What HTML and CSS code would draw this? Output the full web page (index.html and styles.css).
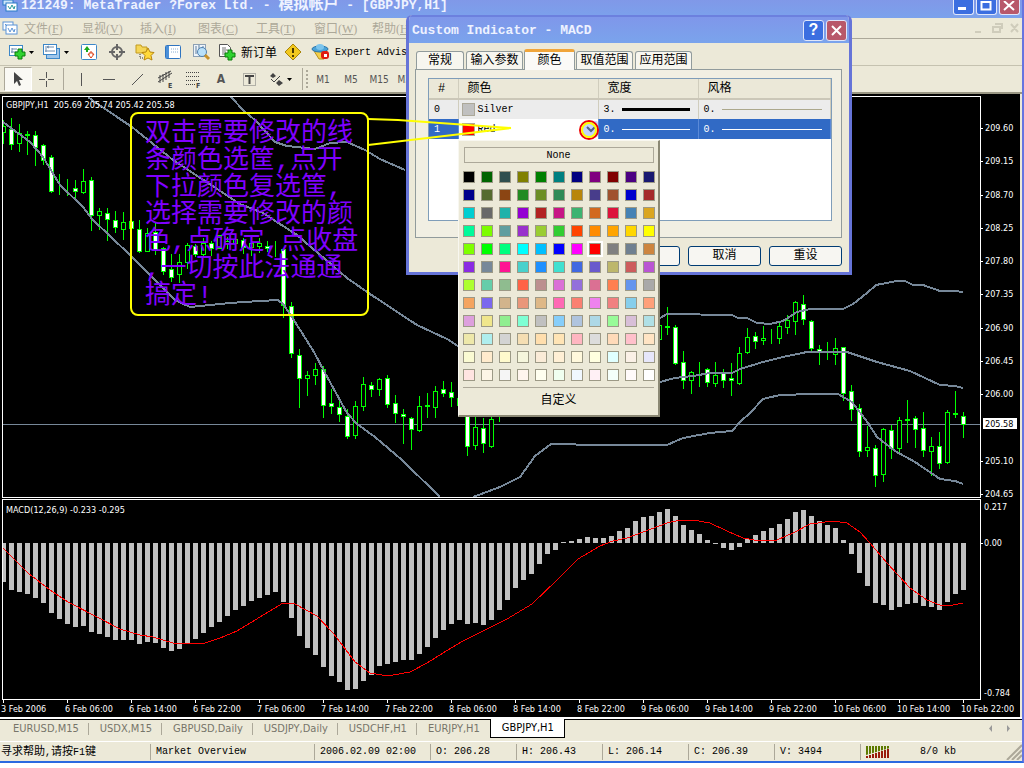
FILE: index.html
```html
<!DOCTYPE html>
<html lang="zh-CN">
<head>
    <meta charset="UTF-8">
    <meta name="viewport" content="width=device-width, initial-scale=1">
    <title>MetaTrader - [GBPJPY,H1]</title>
    <link rel="stylesheet" href="styles.css">
</head>
<body>

<div class="app">

    <header class="titlebar">
        <svg class="app-icon" width="16" height="12" viewBox="0 0 16 12"><rect x="1" y="0" width="10" height="5" fill="#cfe6f8" stroke="#2a7ac8"/><rect x="4" y="3" width="11" height="8" fill="#fff" stroke="#2a7ac8"/><path d="M6 6l2 3 2-4 2 4 1-3" fill="none" stroke="#2a9a9a"/></svg>
        <h1>121249: MetaTrader ?Forex Ltd. - <span class="cn">模拟帐户</span> - [GBPJPY,H1]</h1>
        <div class="win-buttons">
            <button aria-label="Minimize"><svg width="19" height="13"><rect x="4" y="6" width="8" height="3" fill="#fff"/></svg></button>
            <button aria-label="Maximize"><svg width="19" height="13"><path d="M4.500 0v8.500h9V0M4 1h10" fill="none" stroke="#fff" stroke-width="2"/></svg></button>
            <button class="close" aria-label="Close"><svg width="19" height="13"><path d="M4 0l10 9M14 0L4 9" stroke="#fff" stroke-width="2"/></svg></button>
        </div>
    </header>

    <nav class="menu">
        <svg width="16" height="16" viewBox="0 0 16 16"><rect x="1" y="2" width="10" height="8" fill="#fff" stroke="#5b93d6"/><rect x="4" y="5" width="11" height="9" fill="#fff" stroke="#5b93d6"/><path d="M3 4l2 2M6 8l2 4 2-4 2 4 1-3" fill="none" stroke="#5b93d6"/></svg>
        <a href="#">文件(<u>F</u>)</a>
        <a href="#">显视(<u>V</u>)</a>
        <a href="#">插入(<u>I</u>)</a>
        <a href="#">图表(<u>C</u>)</a>
        <a href="#">工具(<u>T</u>)</a>
        <a href="#">窗口(<u>W</u>)</a>
        <a href="#">帮助(<u>H</u>)</a>
        <svg class="mdi" width="50" height="14" viewBox="0 0 50 14"><g fill="none" stroke="#cfccbb" stroke-width="2"><path d="M3 11h6M23 3h7v5M21 6h7v5h-7zM39 3l7 8M46 3l-7 8"/></g></svg>
    </nav>

    <div class="toolbar">
        <button class="w30" aria-label="New chart"><svg width="28" height="18" viewBox="0 0 28 18"><rect x="1.500" y="2.500" width="13" height="10" fill="#fff" stroke="#3c87c8"/><path d="M4 5v5M3 9h9M4 6h5" stroke="#6c8cae" fill="none"/><path d="M10 6h4v3h3v4h-3v3h-4v-3H7V9h3z" fill="#2fd22f" stroke="#0a7d0a"/><path d="M21 8h5l-2.500 3z"/></svg></button>
        <button class="w36" aria-label="Profiles"><svg width="28" height="18" viewBox="0 0 28 18"><rect x="4.500" y="5.500" width="13" height="10" fill="#9fc6ea" stroke="#3c87c8"/><rect x="1.500" y="1.500" width="13" height="10" fill="#fff" stroke="#3c87c8"/><path d="M4 3v6M3 8h10M5 4h7M7 3l-2 1 2 1" stroke="#6c8cae" fill="none"/><path d="M22 8h5l-2.500 3z"/></svg></button>
        <button aria-label="Market watch"><svg width="18" height="18" viewBox="0 0 18 18"><rect x="1.500" y="1.500" width="15" height="15" rx="1" fill="#fff" stroke="#3c87c8"/><path d="M7 3l3 4H8v2H6V7H4z" fill="#1aa81a"/><path d="M11 15l-3-4h2V9h2v2h2z" fill="#fff" stroke="#d83a10"/></svg></button>
        <button aria-label="Crosshair"><svg width="18" height="18" viewBox="0 0 18 18"><circle cx="9" cy="9" r="5" fill="none" stroke="#666" stroke-width="2"/><path d="M9 1v6M9 11v6M1 9h6M11 9h6" stroke="#666" stroke-width="2"/></svg></button>
        <button aria-label="Navigator"><svg width="20" height="18" viewBox="0 0 20 18"><path d="M1 2h5l1 2h5v6H1z" fill="#f5d657" stroke="#c29a20"/><path d="M5 11v4h4" fill="none" stroke="#333" stroke-dasharray="1 1"/><path d="M13 5l2 4 4 .5-3 3 1 4.500-4-2-4 2 1-4.500-3-3 4-.5z" fill="#ffd93b" stroke="#b8860b"/></svg></button>
        <button aria-label="Terminal"><svg width="18" height="18" viewBox="0 0 18 18"><rect x="1.500" y="2.500" width="15" height="13" rx="1" fill="#fff" stroke="#2f74c0"/><rect x="2" y="3" width="3" height="12" fill="#4b90d8"/><path d="M7 6h8M7 9h8" stroke="#8aaed2" stroke-dasharray="1 1"/></svg></button>
        <button aria-label="Tester"><svg width="20" height="18" viewBox="0 0 20 18"><rect x="2.500" y="1.500" width="12" height="12" fill="#eef4fa" stroke="#8ca0b4"/><path d="M5 3v8M8 2v6M12 3v5" stroke="#5f7f9f"/><circle cx="11" cy="9" r="4.500" fill="#b9e1fa" stroke="#4f7fae"/><path d="M14 12l4 4" stroke="#c8922a" stroke-width="3"/></svg></button>
        <button class="order"><svg width="20" height="18" viewBox="0 0 20 18"><path d="M2.500 1.500h8l3 3v9h-11z" fill="#fff" stroke="#555"/><path d="M5 5h4M5 7h6M5 9h4M5 11h3" stroke="#777"/><path d="M11 7h4v3h3v4h-3v3h-4v-3H8v-4h3z" fill="#2fd22f" stroke="#0a7d0a"/></svg><span class="cn">新订单</span></button>
        <button aria-label="Warning"><svg width="18" height="18" viewBox="0 0 18 18"><path d="M9 1l8 8-8 8-8-8z" fill="#f2c81e" stroke="#a88408"/><path d="M9 5v5M9 12v2" stroke="#4a3a00" stroke-width="2"/></svg></button>
        <button class="expert"><svg width="20" height="18" viewBox="0 0 20 18"><path d="M3 8h13l-3 8H8z" fill="#f2cf4a" stroke="#b8901a"/><ellipse cx="9" cy="6" rx="8" ry="3" fill="#4aa3d8" stroke="#2a73a8"/><ellipse cx="9" cy="4" rx="4" ry="3" fill="#7cc4ec"/><rect x="10" y="8" width="8" height="8" rx="3" fill="#e01c10"/><rect x="13" y="11" width="3" height="3" fill="#fff"/></svg>Expert Advisors</button>
    </div>

    <div class="toolbar lines">
        <button class="pressed" aria-label="Cursor"><svg width="18" height="18" viewBox="0 0 18 18"><path d="M5 2v12l3-3 2 5 2-1-2-5h4z" fill="#444"/></svg></button>
        <button aria-label="Cross"><svg width="18" height="18" viewBox="0 0 18 18"><path d="M9.500 2v6M9.500 11v6M2 9.500h6M11 9.500h6" stroke="#555"/></svg></button>
        <i class="sep"></i>
        <button aria-label="Vertical line"><svg width="18" height="18" viewBox="0 0 18 18"><path d="M9.500 3v13" stroke="#555"/></svg></button>
        <button aria-label="Horizontal line"><svg width="18" height="18" viewBox="0 0 18 18"><path d="M3 9.500h12" stroke="#555"/></svg></button>
        <button aria-label="Trend line"><svg width="18" height="18" viewBox="0 0 18 18"><path d="M4 15L15 4" stroke="#555"/></svg></button>
        <button aria-label="Channel"><svg width="20" height="20" viewBox="0 0 20 20"><path d="M3 13L17 4M3 9l13-7M5 6v8M8 5v8M11 3v8M14 2v7" stroke="#444"/><text x="13" y="19" class="ico">E</text></svg></button>
        <button aria-label="Fibonacci"><svg width="20" height="20" viewBox="0 0 20 20"><path d="M3 3.500h14M3 7.500h14M3 11.500h14M3 15.500h9" stroke="#444" stroke-dasharray="1 1"/><text x="13" y="19" class="ico">F</text></svg></button>
        <button class="letter">A</button>
        <button aria-label="Text label"><svg width="18" height="18" viewBox="0 0 18 18"><rect x="3.500" y="3.500" width="12" height="12" fill="none" stroke="#777" stroke-dasharray="1 1"/><path d="M5 6h9M9.500 6v8" stroke="#444" stroke-width="2" fill="none"/></svg></button>
        <button class="arrows" aria-label="Arrows"><svg width="28" height="18" viewBox="0 0 28 18"><path d="M3 6l3-3 3 3-3 2zM9 13l3-3 4 3-4 3z" fill="#444"/><path d="M4 9l3 3 6-6" stroke="#444" fill="none"/><path d="M20 8h5l-2.500 3z"/></svg></button>
        <i class="sep"></i><i class="grip"></i>
        <button class="period">M1</button>
        <button class="period">M5</button>
        <button class="period">M15</button>
        <button class="period">M30</button>
    </div>

    <main>
        <svg id="chart" class="chart" viewBox="0 94 1020 623"></svg>
    </main>

    <nav class="chart-tabs">
        <a href="#">EURUSD,M15</a>
        <a href="#">USDX,M15</a>
        <a href="#">GBPUSD,Daily</a>
        <a href="#">USDJPY,Daily</a>
        <a href="#">USDCHF,H1</a>
        <a href="#">EURJPY,H1</a>
        <a href="#" class="active">GBPJPY,H1</a>
        <svg class="scroll" width="24" height="9" viewBox="0 0 24 9"><path d="M4 1v7L1 4.500zM19 1v7l3-3.500z" fill="#999"/></svg>
    </nav>

    <footer class="status">
        <span class="help"><span class="cn">寻求帮助</span>,<span class="cn">请按</span>F1<span class="cn">键</span></span>
        <span class="overview">Market Overview</span>
        <span class="date">2006.02.09 02:00</span>
        <span>O: 206.28</span>
        <span>H: 206.43</span>
        <span>L: 206.14</span>
        <span>C: 206.39</span>
        <span>V: 3494</span>
        <span class="traffic">
            <svg width="24" height="12" viewBox="0 0 24 12"><path d="M0 4.500h24" stroke="#5d7a00" stroke-width="9" stroke-dasharray="2 1"/><path d="M0 12V9L24 2v10z" fill="#ece9d8"/><path d="M1 12v-2M4 12V9M7 12V8M10 12V7M13 12V6M16 12V5M19 12V4M22 12V3" stroke="#9a1c0c" stroke-width="2"/></svg>
            8/0 kb
        </span>
        <svg class="resize" width="16" height="16" viewBox="0 0 16 16"><path d="M1 16L16 1M6 16L16 6M11 16l5-5" stroke="#aca899" stroke-width="2"/></svg>
    </footer>

    <!-- dialog -->
    <section class="dialog">
        <header>
            <h2>Custom Indicator - MACD</h2>
            <button aria-label="Help">?</button>
            <button class="close" aria-label="Close"><svg width="17" height="17"><path d="M4 4l9 9M13 4l-9 9" stroke="#fff" stroke-width="2"/></svg></button>
        </header>
        <div class="tabs">
            <button class="short">常规</button>
            <button>输入参数</button>
            <button class="short active">颜色</button>
            <button>取值范围</button>
            <button>应用范围</button>
        </div>
        <div class="panel">
            <div class="list">
                <table>
                    <thead>
                        <tr><th class="c-num">#</th><th class="c-color">颜色</th><th class="c-width">宽度</th><th>风格</th></tr>
                    </thead>
                    <tbody>
                        <tr>
                            <td>0</td>
                            <td><div class="cell"><i class="chip silver"></i>Silver</div></td>
                            <td><div class="cell">3. <i class="line thick"></i></div></td>
                            <td><div class="cell">0. <i class="line thin"></i></div></td>
                        </tr>
                        <tr class="selected">
                            <td>1</td>
                            <td class="edit"><div class="cell"><i class="chip red"></i><select aria-label="颜色"><option>Red</option></select><svg width="15" height="16" viewBox="0 0 15 16"><rect width="15" height="16" rx="2" fill="#c3d3fd"/><path d="M4 6l4 4 4-4" fill="none" stroke="#4d6185" stroke-width="2"/></svg></div></td>
                            <td><div class="cell">0. <i class="line thin"></i></div></td>
                            <td><div class="cell">0. <i class="line thin"></i></div></td>
                        </tr>
                    </tbody>
                </table>
            </div>
        </div>
        <div class="actions">
            <button>确定</button>
            <button>取消</button>
            <button>重设</button>
        </div>
    </section>

    <div class="picker">
        <button class="none">None</button>
        <div id="swatches" class="swatches"></div>
        <button class="custom">自定义</button>
    </div>

    <!-- note on top of the chart -->
    <div class="note">双击需要修改的线<br>条颜色选筐,点开<br>下拉颜色复选筐,<br>选择需要修改的颜<br>色,点确定,点收盘<br>,一切按此法通通<br>搞定!</div>
    <svg class="pointer" width="240" height="50" viewBox="0 0 240 50">
        <path d="M0 9l30 1 113 8M143 18L85 25 0 35" fill="none" stroke="#ff0" stroke-width="2"/>
        <circle cx="221" cy="20" r="9" fill="none" stroke="#e00" stroke-width="2"/>
        <circle cx="221" cy="20" r="7" fill="none" stroke="#ff0" stroke-width="2"/>
    </svg>

</div>

<script src="script.js"></script>
</body>
</html>
```
FILE: styles.css
```css
* {
    box-sizing: border-box;
}
body {
    margin: 0;
    background-color: white;
    font-family: "Liberation Mono", "Noto Sans CJK SC", monospace;
    font-size: 10px;
    color: black;
}
button {
    font: inherit;
    color: inherit;
    margin: 0;
    padding: 0;
    border: none;
    background: none;
}
a {
    color: inherit;
    text-decoration: none;
}
svg {
    display: block;
    flex: none;
}
.cn {
    font-size: 12px;
}
.app {
    position: relative;
    background-color: #ece9d8;
    border-right: 2px solid #6674e0;
    border-bottom: 2px solid #2a6ae0;
    overflow: hidden;
}

/* title */
.titlebar {
    display: flex;
    height: 18px;
    padding: 0 2px;
    background: linear-gradient(#8098e8, #7ba2ec);
    overflow: hidden;
}
.titlebar h1 {
    flex: 1;
    margin: 0 0 0 3px;
    font-size: 13px;
    line-height: 12px;
    color: #eef2ff;
    white-space: nowrap;
}
.titlebar h1 .cn {
    font-size: 15px;
    line-height: 12px;
}
.win-buttons {
    display: flex;
    gap: 2px;
}
.win-buttons button,
.dialog header button {
    width: 21px;
    height: 15px;
    border: 1px solid #dfe6fa;
    border-top: none;
    border-radius: 0 0 3px 3px;
    background-color: #3b6ee0;
    color: white;
}
.win-buttons .close,
.dialog header .close {
    background-color: #b8586a;
}

/* menu + toolbars */
.menu {
    display: flex;
    align-items: center;
    height: 21px;
    padding-left: 2px;
    border-bottom: 1px solid #aca899;
    color: #aca899;
}
.menu a {
    width: 58px;
    padding-left: 6px;
    font-family: "Liberation Serif", "Noto Sans CJK SC", serif;
    font-size: 12px;
}
.mdi {
    margin-left: auto;
}
.toolbar {
    display: flex;
    align-items: center;
    height: 27px;
    padding-left: 7px;
    border-bottom: 1px solid #c5c2b0;
}
.toolbar button {
    display: flex;
    align-items: center;
    justify-content: center;
    width: 28px;
    height: 24px;
    flex: none;
}
.toolbar .w30 {
    width: 30px;
}
.toolbar .w36 {
    width: 38px;
}
.toolbar .order {
    width: 64px;
    gap: 4px;
}
.toolbar .expert {
    width: 122px;
    gap: 4px;
    font-size: 10px;
}
.toolbar.lines {
    height: 28px;
    padding-left: 4px;
    border-bottom: 2px solid #9a9784;
    font-family: "DejaVu Sans Condensed", "Liberation Sans", sans-serif;
    color: #555;
}
.toolbar .pressed {
    background-color: #faf9f4;
    border: 1px solid #aca899;
    border-right-color: white;
    border-bottom-color: white;
}
.toolbar .letter {
    font-weight: bold;
    font-size: 12px;
}
.toolbar .arrows {
    width: 36px;
}
.ico {
    font-size: 7px;
    font-weight: bold;
    fill: #444;
}
.sep {
    width: 1px;
    height: 22px;
    margin: 0 3px;
    background-color: #aca899;
}
.grip {
    width: 3px;
    height: 18px;
    border-left: 2px dotted #aca899;
}

/* chart */
main {
    border-bottom: 2px solid white;
}
.chart {
    width: 100%;
    padding-right: 2px;
    font-family: "DejaVu Sans Condensed", "Liberation Sans", sans-serif;
    font-size: 9px;
    shape-rendering: crispEdges;
}
.chart text {
    fill: white;
}
.back {
    fill: black;
}
.frame {
    fill: none;
    stroke: white;
}
.band {
    fill: none;
    stroke: #778899;
    stroke-width: 2;
}
.bid {
    stroke: #778899;
}
.wick {
    stroke: lime;
}
.up {
    fill: black;
    stroke: lime;
}
.down {
    fill: white;
    stroke: lime;
}
.hist {
    fill: silver;
}
.signal {
    fill: none;
    stroke: red;
}
.chart .price-tag {
    fill: black;
}

/* bottom */
.chart-tabs {
    display: flex;
    height: 22px;
    padding: 0 10px 0 2px;
    border-top: 1px solid black;
    font-family: "DejaVu Sans Condensed", "Liberation Sans", sans-serif;
    font-size: 11px;
    line-height: 18px;
    color: #77756a;
}
.chart-tabs a {
    padding: 0 10px 0 11px;
    background: linear-gradient(#aca899, #aca899) right 3px / 1px 12px no-repeat;
}
.chart-tabs a:nth-child(6) {
    background: none;
}
.chart-tabs .active {
    margin-top: -1px;
    height: 19px;
    border: 1px solid black;
    border-top: none;
    background: white;
    color: black;
}
.scroll {
    margin: 4px 0 0 auto;
}
.status {
    display: flex;
    align-items: center;
    height: 20px;
    border-top: 1px solid white;
}
.status > span {
    width: 86px;
    height: 16px;
    padding-left: 5px;
    line-height: 16px;
    border-left: 1px solid #aca899;
    white-space: nowrap;
}
.status .cn {
    font-size: 11px;
}
.status .help {
    width: 150px;
    padding-left: 1px;
    border: none;
}
.status .overview {
    width: 164px;
}
.status .date {
    width: 116px;
}
.status .traffic {
    display: flex;
    align-items: center;
    gap: 30px;
    width: 120px;
}
.resize {
    margin-left: auto;
}

/* dialog */
.dialog {
    position: absolute;
    left: 406px;
    top: 15px;
    width: 446px;
    border: 3px solid #6674d8;
    border-top: none;
    border-radius: 6px 6px 0 0;
    background-color: #ece9d8;
    overflow: hidden;
}
.dialog header {
    display: flex;
    align-items: center;
    gap: 2px;
    height: 28px;
    padding: 0 2px 0 3px;
    border-top: 2px solid #6c80de;
    background: linear-gradient(#7f97ea, #7aa4ec);
}
.dialog h2 {
    flex: 1;
    margin: 0;
    font-size: 13px;
    color: #eef2ff;
}
.dialog header button {
    height: 21px;
    border: 1px solid #dfe6fa;
    border-radius: 3px;
    font: bold 16px "Liberation Sans", sans-serif;
    padding: 0 1px;
}
.tabs {
    display: flex;
    align-items: flex-end;
    gap: 2px;
    height: 26px;
    padding-left: 7px;
    font-size: 12px;
}
.tabs button {
    width: 57px;
    height: 18px;
    line-height: 16px;
    border: 1px solid #919b9c;
    border-bottom: none;
    border-radius: 3px 3px 0 0;
    background-color: #f7f6ef;
}
.tabs .short {
    width: 48px;
}
.tabs .active {
    position: relative;
    width: 51px;
    height: 21px;
    margin: 0 -1px -1px;
    border-top: 3px solid #f0a53a;
    background-color: #fbfaf7;
}
.panel {
    margin: 0 7px 0 6px;
    padding: 8px 9px 16px 12px;
    border: 1px solid #919b9c;
    background-color: #f1efe3;
}
.list {
    height: 143px;
    border: 1px solid #7f9db9;
    background-color: white;
}
table {
    width: 100%;
    border-collapse: collapse;
    table-layout: fixed;
}
th, td {
    height: 20px;
    padding: 0 5px;
    text-align: left;
    border-right: 1px solid #d0cdbd;
}
th {
    height: 20px;
    padding-left: 9px;
    font-size: 12px;
    line-height: 16px;
    font-weight: normal;
    background-color: #ebe8d8;
    border-bottom: 2px solid #cbc7b8;
}
td {
    background-color: #ececec;
}
.c-num {
    width: 29px;
}
.c-color {
    width: 140px;
}
.c-width {
    width: 100px;
}
.cell {
    display: flex;
    align-items: center;
    gap: 6px;
}
.chip {
    width: 13px;
    height: 13px;
    margin: 0 -3px 0 -2px;
    border: 1px solid #aca899;
}
.silver {
    background-color: silver;
}
.red {
    background-color: red;
}
.line {
    flex: 1;
    margin-right: 3px;
    border-top: 1px solid #aca88c;
}
.thick {
    border-top: 3px solid black;
}
.selected td {
    background-color: #316ac5;
    color: white;
    border-color: #5b8ad8;
}
.selected .line {
    border-color: white;
}
.selected .edit {
    padding-right: 0;
    background-color: white;
    color: black;
}
select {
    flex: 1;
    font: inherit;
    border: none;
    padding: 0;
    background: none;
    appearance: none;
}
.actions {
    display: flex;
    justify-content: flex-end;
    gap: 8px;
    padding: 8px 7px 6px;
    font-size: 12px;
}
.actions button {
    width: 73px;
    height: 20px;
    line-height: 16px;
    border: 1px solid #003c74;
    border-radius: 3px;
    background-color: #f7f6f2;
}

/* colour drop-down */
.picker {
    position: absolute;
    left: 458px;
    top: 140px;
    width: 202px;
    padding: 6px 4px 5px;
    border: 1px solid #f8f7f0;
    border-right: 2px solid #8b8874;
    border-bottom: 2px solid #8b8874;
    background-color: #ece9d8;
    text-align: center;
}
.none {
    width: 190px;
    height: 16px;
    border: 1px solid #aca899;
}
.swatches {
    display: grid;
    grid-template-columns: repeat(11, 12px);
    gap: 6px;
    padding: 8px 0 6px;
    margin-bottom: 4px;
    border-bottom: 1px solid #aca899;
}
.swatches button {
    height: 12px;
    border: 1px solid #9c9986;
}
.swatches .picked {
    outline: 2px solid white;
}
.custom {
    width: 100%;
    height: 18px;
    line-height: 18px;
    font-size: 12px;
}

/* note */
.note {
    position: absolute;
    left: 130px;
    top: 112px;
    width: 239px;
    height: 204px;
    padding: 7px 0 0 13px;
    border: 2px solid yellow;
    border-radius: 8px;
    font-size: 26px;
    line-height: 27px;
    white-space: nowrap;
    color: #8000ff;
}
.pointer {
    position: absolute;
    left: 368px;
    top: 110px;
    pointer-events: none;
}
```
FILE: script.js
```js
const chart = document.querySelector("#chart");
const swatches = document.querySelector("#swatches");
const STEP = 8;
const FIRST = 3;
const ZERO = 543;

// high, body top, body bottom, low, filled
const candles = [
    [120,126,132,143,0],[118,129,144,149,1],[124,133,143,151,0],[131,134,135,154,1],[131,135,147,165,1],
    [144,145,160,164,1],[155,157,191,192,1],[174,189,189,194,0],[179,189,189,195,0],[180,188,191,198,1],
    [169,181,192,193,0],[177,180,215,230,1],[208,211,215,229,0],[208,213,219,240,1],[211,220,227,232,1],
    [212,222,229,239,0],[221,221,228,229,1],[220,229,251,252,1],[228,233,251,251,0],[222,232,249,254,1],
    [247,248,271,274,1],[254,269,277,281,1],[254,262,274,282,0],[243,245,262,268,0],[244,246,254,256,1],
    [238,243,254,257,0],[241,243,248,255,1],[235,235,248,248,0],[237,241,243,248,0],[236,239,243,249,0],
    [238,240,247,253,1],[242,243,247,255,0],[238,243,246,252,0],[241,246,248,251,1],[241,250,250,256,1],
    [249,249,305,317,1],[302,306,353,357,1],[349,355,378,407,1],[371,375,378,395,0],[363,369,375,384,0],
    [366,369,405,417,1],[389,403,406,413,1],[400,407,414,421,1],[409,416,436,438,1],[401,406,435,438,0],
    [377,384,406,410,0],[382,385,389,396,1],[378,379,389,395,0],[375,378,404,407,1],[395,403,413,422,1],
    [409,414,416,443,1],[417,418,429,449,1],[396,406,430,431,0],[393,405,406,417,1],[386,391,407,417,0],
    [381,389,393,396,1],[382,392,397,406,1],[390,398,405,410,1],[400,400,446,455,1],[413,427,445,449,0],
    [418,428,443,452,1],[410,419,446,447,0],[412,416,416,421,0],
    null,null,null,null,null,null,null,null,null,null,null,null,null,null,null,null,null,null,null,
    [318,325,339,340,0],[307,326,327,334,1],[325,327,363,364,1],[351,362,380,388,1],[371,372,380,393,0],
    [362,371,371,386,0],[368,369,382,386,1],[362,375,383,386,0],[369,373,380,387,1],[363,378,380,395,1],
    [347,353,383,384,0],[328,337,352,353,0],[332,336,341,348,1],[326,338,340,344,0],[329,338,338,343,0],
    [322,326,338,343,0],[315,320,327,333,0],[301,302,321,334,0],[295,304,319,324,1],[320,321,348,350,1],
    [345,349,351,364,1],[342,352,352,359,0],[338,348,354,364,0],[347,347,393,400,1],[385,391,409,420,1],
    [404,408,451,456,1],[426,447,450,456,0],[445,448,475,486,1],[428,429,474,481,0],[425,430,448,458,1],
    [417,420,448,452,0],[400,419,420,442,1],[416,418,429,447,1],[412,428,450,456,1],[437,446,451,475,0],
    [432,446,463,468,1],[410,412,462,463,0],[391,413,414,417,1],[412,416,424,437,1]
];

// MACD bar ends, in the same pixel scale
const hist = [
    582,590,592,594,598,603,613,619,624,627,626,632,634,637,640,640,640,644,642,643,648,
    651,649,644,639,633,627,622,616,610,606,601,598,595,592,602,618,636,648,655,667,676,
    682,690,689,681,675,666,664,662,660,660,654,647,638,630,624,620,624,623,625,620,610,
    600,588,580,574,564,554,550,542,541,539,537,538,538,536,531,528,521,517,516,512,509,
    516,525,530,534,540,544,548,550,547,539,535,531,528,524,519,512,510,516,521,525,528,
    540,554,573,586,603,605,610,607,604,603,606,607,610,602,594,590
];

const bands = [
    "88,97 92,100 120,119 132,127 173,160 240,204 263,213 297,235 347,278 370,294 417,325 447,339 458,346",
    "231,97 245,112 255,120 275,142 287,146 315,149 330,143 347,142 365,150 380,159 405,170",
    "3,122 30,142 43,157 60,185 83,207 92,219 130,255 175,300 190,307 230,303 260,301 278,300 284,305 297,325 314,352 325,373 347,413 357,424 375,437 402,460 440,497",
    "473,497 500,487 520,477 535,456 551,444 600,445 650,445 667,445 683,438 710,433 732,431 740,422 750,413 763,399 780,395 813,394 838,394 852,402 868,423 877,437 895,451 915,462 940,479 955,481 963,484",
    "650,322 660,318 667,314 732,315 738,318 747,318 757,323 770,324 783,321 797,312 810,309 843,309 853,304 867,293 876,285 897,281 905,281 913,285 923,285 940,291 955,291 963,292",
    "650,386 660,382 675,378 693,376 710,373 732,373 740,369 763,362 783,357 807,352 847,352 877,362 910,371 940,385 955,386 963,388"
];

const signal = "3,548 28,573 50,590 68,602 97,617 120,629 140,635 153,637 173,643 205,643 220,638 237,631 260,617 283,603 295,604 317,616 333,633 340,642 355,662 370,673 388,676 410,672 427,663 443,653 463,641 507,619 532,604 557,580 578,559 600,546 613,541 627,538 643,532 667,523 680,520 693,520 710,523 727,531 743,538 760,541 777,540 793,533 810,524 833,521 847,523 860,532 870,543 887,563 910,588 927,600 940,605 953,605 963,603";

const prices = [[128,"209.60"],[161,"209.15"],[195,"208.70"],[228,"208.25"],[261,"207.80"],[294,"207.35"],
    [328,"206.90"],[361,"206.45"],[394,"206.00"],[461,"205.10"],[494,"204.65"]];

const times = ["3 Feb 2006","6 Feb 06:00","6 Feb 14:00","6 Feb 22:00","7 Feb 06:00","7 Feb 14:00","7 Feb 22:00",
    "8 Feb 06:00","8 Feb 14:00","8 Feb 22:00","9 Feb 06:00","9 Feb 14:00","9 Feb 22:00","10 Feb 06:00",
    "10 Feb 14:00","10 Feb 22:00"];

const colors = `Black DarkGreen DarkSlateGray Olive Green Teal Navy Purple Maroon Indigo MidnightBlue
DarkBlue DarkOliveGreen SaddleBrown ForestGreen OliveDrab SeaGreen DarkGoldenrod DarkSlateBlue Sienna MediumBlue Brown
DarkTurquoise DimGray LightSeaGreen DarkViolet FireBrick MediumVioletRed MediumSeaGreen Chocolate Crimson SteelBlue Goldenrod
MediumSpringGreen LawnGreen CadetBlue DarkOrchid YellowGreen LimeGreen OrangeRed DarkOrange Orange Gold Yellow
Chartreuse Lime SpringGreen Aqua DeepSkyBlue Blue Magenta Red Gray SlateGray Peru
BlueViolet LightSlateGray DeepPink MediumTurquoise DodgerBlue Turquoise RoyalBlue SlateBlue DarkKhaki IndianRed MediumOrchid
GreenYellow MediumAquamarine DarkSeaGreen Tomato RosyBrown Orchid MediumPurple PaleVioletRed Coral CornflowerBlue DarkGray
SandyBrown MediumSlateBlue Tan DarkSalmon BurlyWood HotPink Salmon Violet LightCoral SkyBlue LightSalmon
Plum Khaki LightGreen Aquamarine Silver LightSkyBlue LightSteelBlue LightBlue PaleGreen Thistle PowderBlue
PaleGoldenrod PaleTurquoise LightGray Wheat NavajoWhite Moccasin LightPink Gainsboro PeachPuff Pink Bisque
LightGoldenrodYellow BlanchedAlmond LemonChiffon Beige AntiqueWhite PapayaWhip Cornsilk LightYellow LightCyan Linen Lavender
MistyRose OldLace WhiteSmoke Seashell Ivory Honeydew AliceBlue LavenderBlush MintCream Snow White`.split(/\s+/);

function drawChart() {
    let out = `<rect class="back" x="0" y="94" width="1020" height="624"/>`;
    out += `<defs><clipPath id="plot"><rect x="3" y="97" width="977" height="602"/></clipPath></defs><g clip-path="url(#plot)">`;
    out += `<path class="bid" d="M3 424.5H980"/>`;

    candles.forEach((c, i) => {
        if (!c) return;
        const x = FIRST + i * STEP + 0.5;
        const [high, top, bottom, low, filled] = c;
        out += `<path class="wick" d="M${x} ${high}V${low + 1}"/>`;
        out += `<rect class="${filled ? "down" : "up"}" x="${x - 2}" y="${top + 0.5}" width="4" height="${bottom - top}"/>`;
    });
    bands.forEach(p => out += `<polyline class="band" points="${p}"/>`);

    hist.forEach((y, i) => {
        const x = FIRST + i * STEP - 2;
        out += `<rect class="hist" x="${x}" y="${Math.min(y, ZERO)}" width="5" height="${Math.abs(y - ZERO)}"/>`;
    });
    out += `<polyline class="signal" points="${signal}"/></g>`;

    // Frames and axes
    out += `<path class="frame" d="M2.500 497.500V96.500H980.500V497.500zM2.500 699.500V499.500H980.500V699.500z"/>`;
    prices.forEach(([y, t]) => {
        out += `<path class="frame" d="M981 ${y + 0.5}h2"/><text x="985" y="${y + 3}">${t}</text>`;
    });
    out += `<rect x="983" y="418" width="34" height="11" fill="white"/><text class="price-tag" x="985" y="427">205.58</text>`;
    out += `<text x="984" y="510">0.217</text><text x="984" y="546">0.00</text><text x="984" y="696">-0.784</text>`;
    out += `<path class="frame" d="M981 543.5h2"/>`;
    times.forEach((t, i) => {
        const x = FIRST + i * 64;
        out += `<path class="frame" d="M${x + 0.5} 699v4"/><text x="${x - 2}" y="712">${t}</text>`;
    });
    out += `<text x="6" y="108">GBPJPY,H1 &nbsp;205.69 205.74 205.42 205.58</text>`;
    out += `<text x="6" y="513">MACD(12,26,9) -0.233 -0.295</text>`;
    chart.innerHTML = out;
}

function drawSwatches() {
    colors.forEach(name => {
        const b = document.createElement("button");
        b.style.backgroundColor = name;
        b.setAttribute("aria-label", name);
        if (name == "Red") b.className = "picked";
        swatches.appendChild(b);
    });
}

drawChart();
drawSwatches();
```
